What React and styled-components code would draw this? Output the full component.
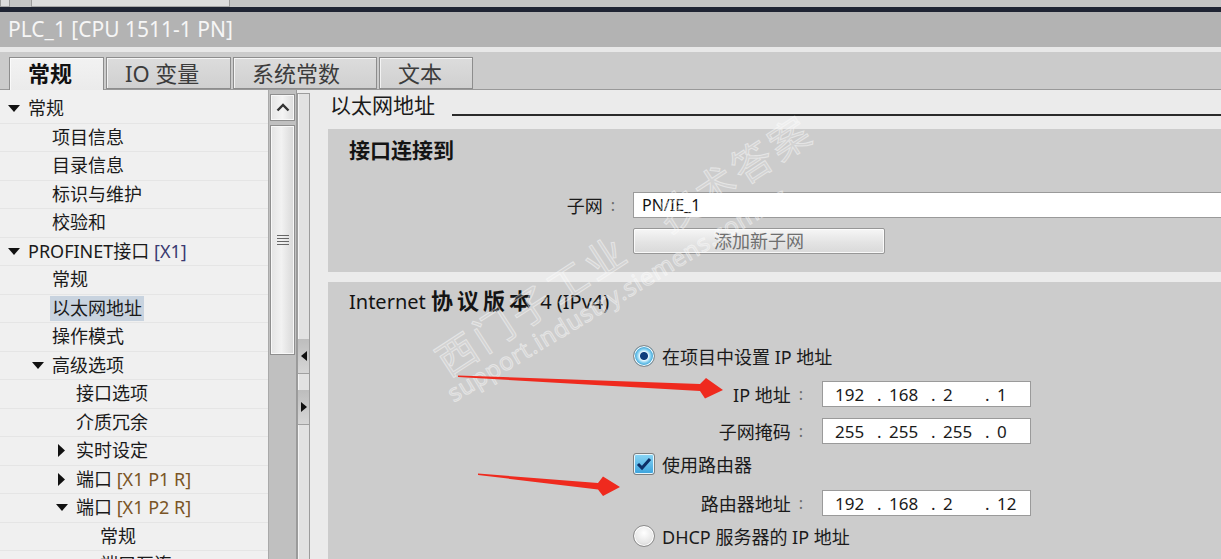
import React from 'react';
import styled, { createGlobalStyle } from 'styled-components';

const GlobalStyle = createGlobalStyle`
  html, body { margin: 0; padding: 0; }
  body {
    background: #ebebeb;
    font-family: "Noto Sans", "Noto Sans CJK SC", sans-serif;
    overflow: hidden;
  }
`;

const treeItems = [
  { level: 0, caret: 'down', text: '常规' },
  { level: 1, text: '项目信息' },
  { level: 1, text: '目录信息' },
  { level: 1, text: '标识与维护' },
  { level: 1, text: '校验和' },
  { level: 0, caret: 'down', text: 'PROFINET接口 ', tag: '[X1]', tone: '#3a3a70' },
  { level: 1, text: '常规' },
  { level: 1, text: '以太网地址', selected: true },
  { level: 1, text: '操作模式' },
  { level: 1, caret: 'down', text: '高级选项' },
  { level: 2, text: '接口选项' },
  { level: 2, text: '介质冗余' },
  { level: 2, caret: 'right', text: '实时设定' },
  { level: 2, caret: 'right', text: '端口 ', tag: '[X1 P1 R]', tone: '#7a5526' },
  { level: 2, caret: 'down', text: '端口 ', tag: '[X1 P2 R]', tone: '#7a5526' },
  { level: 3, text: '常规' },
  { level: 3, text: '端口互连' },
];

const tabs = [
  { label: '常规', w: 95, active: true },
  { label: 'IO 变量', w: 125 },
  { label: '系统常数', w: 144 },
  { label: '文本', w: 94 },
];

const Page = styled.div`
  position: relative;
  width: 1221px;
  height: 559px;
  overflow: hidden;
  display: flex;
  flex-direction: column;
`;

const TopStrip = styled.div`
  height: 7px;
  background: #c4c4c4;
  display: flex;
`;

const StripBox = styled.div`
  width: ${p => p.$w}px;
  margin-left: ${p => p.$ml || 0}px;
  background: #dcdcdc;
  border-right: 1px solid #9c9c9c;
  border-left: 1px solid #9c9c9c;
  border-bottom: 1px solid #a8a8a8;
`;

const DarkLine = styled.div`
  height: 5px;
  background: #1f2433;
`;

const TitleBar = styled.div`
  height: 35px;
  line-height: 35px;
  background: #b3b3b3;
  color: #f6f6f6;
  font-size: 21px;
  padding-left: 8px;
`;

const LightLine = styled.div`
  height: 5px;
  background: #e8e8e8;
`;

const TabBar = styled.div`
  box-sizing: border-box;
  height: 38px;
  background: #cbcbcb;
  border-bottom: 1px solid #999;
  display: flex;
  align-items: flex-end;
  gap: 2px;
  padding-left: 9px;
`;

const Tab = styled.div`
  box-sizing: border-box;
  width: ${p => p.$w}px;
  height: ${p => (p.$active ? 33 : 32)}px;
  margin-bottom: ${p => (p.$active ? -1 : 0)}px;
  border: 1px solid #8d8d8d;
  border-bottom: ${p => (p.$active ? 'none' : '1px solid #8d8d8d')};
  background: ${p => (p.$active ? 'linear-gradient(#f2f2f2, #ebebeb)' : 'linear-gradient(#dcdcdc, #d0d0d0)')};
  box-shadow: inset 1px 1px 0 rgba(255, 255, 255, 0.7);
  padding-left: 18px;
  font-size: 22px;
  line-height: 30px;
  font-weight: ${p => (p.$active ? 700 : 400)};
  color: ${p => (p.$active ? '#111' : '#3c3c3c')};
  white-space: nowrap;
`;

const Main = styled.div`
  flex: 1;
  display: flex;
  min-height: 0;
`;

const Tree = styled.div`
  width: 268px;
  background: #f0f0f0;
  padding-top: 5px;
  overflow: hidden;
`;

const Row = styled.div`
  box-sizing: border-box;
  height: 28.5px;
  display: flex;
  align-items: center;
  padding-left: ${p => 8 + p.$level * 24}px;
  border-bottom: 1px solid #e5e5e5;
  font-size: 18px;
  color: #1a1a1a;
  white-space: nowrap;
`;

const CaretSlot = styled.div`
  width: 20px;
  display: flex;
  align-items: center;
`;

const Label = styled.span`
  line-height: 25px;
  padding: 0 2px;
  margin-left: -2px;
  background: ${p => (p.$selected ? '#c8d3df' : 'transparent')};
`;

const Tag = styled.span`
  color: ${p => p.$tone};
`;

const Caret = ({ dir }) =>
  dir === 'down' ? (
    <svg width="12" height="7" viewBox="0 0 12 7">
      <path d="M0 0 L12 0 L6 7 Z" fill="#111" />
    </svg>
  ) : (
    <svg width="9" height="13" viewBox="0 0 9 13" style={{ marginLeft: 2 }}>
      <path d="M0 0 L7 6.5 L0 13 Z" fill="#111" />
    </svg>
  );

const ScrollBar = styled.div`
  box-sizing: border-box;
  width: 29px;
  background: #c0c0c0;
  border-left: 1px solid #a9a9a9;
  border-right: 1px solid #9a9a9a;
  padding: 4px 1px 0;
`;

const ScrollButton = styled.div`
  box-sizing: border-box;
  height: 27px;
  border: 1px solid #8f8f8f;
  box-shadow: inset 0 0 0 1px #f8f8f8;
  background: linear-gradient(90deg, #e6e6e6, #f4f4f4 50%, #dcdcdc);
  display: flex;
  align-items: center;
  justify-content: center;
`;

const ScrollThumb = styled.div`
  box-sizing: border-box;
  height: 230px;
  margin-top: 4px;
  border: 1px solid #8f8f8f;
  box-shadow: inset 0 0 0 1px #f8f8f8;
  background: linear-gradient(90deg, #e4e4e4, #f2f2f2 45%, #d8d8d8);
  display: flex;
  align-items: center;
  justify-content: center;
`;

const Splitter = styled.div`
  box-sizing: border-box;
  width: 13px;
  margin-top: 3px;
  border: 1px solid #9c9c9c;
  border-bottom: none;
  background: #e2e2e2;
  box-shadow: inset 1px 0 0 #f4f4f4;
  padding-top: 245px;
`;

const SplitButton = styled.div`
  height: 34px;
  margin-bottom: ${p => p.$mb || 0}px;
  background: linear-gradient(#bdbdbd, #d6d6d6);
  border-bottom: 1px solid #a0a0a0;
  display: flex;
  align-items: center;
  justify-content: center;
`;

const Content = styled.div`
  flex: 1;
  min-width: 0;
  padding-left: 18px;
  display: flex;
  flex-direction: column;
`;

const SectionHeader = styled.div`
  height: 39px;
  box-sizing: border-box;
  padding-top: 3px;
  display: flex;
  align-items: flex-start;
`;

const SectionTitle = styled.div`
  font-size: 21px;
  line-height: 25px;
  color: #1a1a1a;
  padding-left: 2px;
`;

const SectionRule = styled.div`
  flex: 1;
  height: 2px;
  margin: 21px 0 0 17px;
  background: #2a2a2a;
`;

const Panel = styled.div`
  background: #cccccc;
  padding: ${p => p.$pad};
  margin-bottom: 10px;
  overflow: hidden;
`;

const PanelTitle = styled.div`
  padding-left: 21px;
  font-size: ${p => p.$size || 21}px;
  line-height: 26px;
  font-weight: ${p => (p.$bold ? 700 : 400)};
  color: #141414;
  white-space: nowrap;
`;

const Strong = styled.span`
  font-size: 22px;
  line-height: 1;
  font-weight: 700;
  letter-spacing: 4px;
`;

const FormRow = styled.div`
  display: flex;
  align-items: center;
  margin-top: ${p => p.$mt || 0}px;
`;

const FieldLabel = styled.div`
  box-sizing: border-box;
  width: ${p => p.$w}px;
  margin-right: ${p => p.$gap}px;
  display: flex;
  justify-content: flex-end;
  align-items: center;
  font-size: 18px;
  color: #1a1a1a;
  white-space: nowrap;
`;

const Colon = styled.span`
  margin-left: 8px;
  color: #6a6a6a;
  font-size: 16px;
`;

const TextInput = styled.div`
  box-sizing: border-box;
  flex: 1;
  height: 26px;
  margin-right: -3px;
  background: #fff;
  border: 1px solid #9a9a9a;
  padding-left: 8px;
  font-size: 16px;
  line-height: 24px;
  color: #111;
`;

const Button = styled.div`
  box-sizing: border-box;
  width: 252px;
  height: 26px;
  margin-left: 305px;
  border: 1px solid #979797;
  border-radius: 2px;
  background: linear-gradient(#f6f6f6, #e4e4e4 55%, #d9d9d9);
  box-shadow: inset 0 0 0 1px rgba(255, 255, 255, 0.8);
  text-align: center;
  font-size: 18px;
  line-height: 24px;
  color: #6f6f6f;
`;

const Options = styled.div`
  padding-left: 305px;
`;

const OptionRow = styled.div`
  height: 30px;
  margin-top: ${p => p.$mt || 0}px;
  display: flex;
  align-items: center;
  font-size: 18px;
  color: #1a1a1a;
  white-space: nowrap;
`;

const Radio = styled.span`
  box-sizing: border-box;
  width: 22px;
  height: 22px;
  margin-right: 7px;
  border-radius: 50%;
  border: 1px solid #8a8a8a;
  background: ${p =>
    p.$checked
      ? 'radial-gradient(circle, #0f3d7c 0 3.5px, #e8f7fd 4.5px, #8fd4f2 6.5px, #3ea6d8 9px)'
      : 'radial-gradient(circle at 50% 35%, #ffffff, #e6e6e6 60%, #bdbdbd)'};
  box-shadow: inset 0 0 0 1px #fff;
`;

const Check = styled.span`
  box-sizing: border-box;
  width: 22px;
  height: 22px;
  margin-right: 7px;
  border-radius: 3px;
  border: 1px solid #7f7f7f;
  background: linear-gradient(#8bd6f5, #3aa2dc);
  box-shadow: inset 0 0 0 1px #e8f6fc;
  display: flex;
  align-items: center;
  justify-content: center;
`;

const IpField = styled.div`
  box-sizing: border-box;
  width: 209px;
  height: 26px;
  background: #fff;
  border: 1px solid #9a9a9a;
  padding-left: 12px;
  display: flex;
  align-items: center;
  overflow: hidden;
  font-size: 17px;
  color: #1a1a1a;
`;

const Octet = styled.span`
  flex: none;
  width: 54px;
  display: flex;
`;

const OctetNum = styled.span`
  flex: none;
  width: 42px;
`;

const Watermark = styled.div`
  position: absolute;
  left: ${p => p.$x}px;
  top: ${p => p.$y}px;
  transform-origin: 0 50%;
  transform: rotate(${p => p.$deg}deg);
  font-size: ${p => p.$size}px;
  line-height: 1;
  letter-spacing: ${p => p.$ls}px;
  white-space: nowrap;
  color: rgba(255, 255, 255, 0.16);
  -webkit-text-stroke: 1px rgba(255, 255, 255, 0.45);
  pointer-events: none;
`;

const Overlay = styled.svg`
  position: absolute;
  left: 0;
  top: 0;
  pointer-events: none;
`;

const IpInput = ({ parts }) => (
  <IpField>
    {parts.map((n, i) => (
      <Octet key={i}>
        <OctetNum>{n}</OctetNum>
        {i < 3 ? '.' : ''}
      </Octet>
    ))}
  </IpField>
);

const IpRow = ({ label, parts, mt }) => (
  <FormRow $mt={mt} style={{ height: 30 }}>
    <FieldLabel $w={170} $gap={19}>
      {label}
      <Colon>:</Colon>
    </FieldLabel>
    <IpInput parts={parts} />
  </FormRow>
);

const App = () => {
  return (
    <Page>
      <GlobalStyle />
      <TopStrip>
        <StripBox $w={8} />
        <StripBox $w={197} $ml={21} />
      </TopStrip>
      <DarkLine />
      <TitleBar>PLC_1 [CPU 1511-1 PN]</TitleBar>
      <LightLine />
      <TabBar>
        {tabs.map(t => (
          <Tab key={t.label} $w={t.w} $active={t.active}>
            {t.label}
          </Tab>
        ))}
      </TabBar>
      <Main>
        <Tree>
          {treeItems.map((it, i) => (
            <Row key={i} $level={it.level}>
              <CaretSlot>{it.caret && <Caret dir={it.caret} />}</CaretSlot>
              <Label $selected={it.selected}>
                {it.text}
                {it.tag && <Tag $tone={it.tone}>{it.tag}</Tag>}
              </Label>
            </Row>
          ))}
        </Tree>
        <ScrollBar>
          <ScrollButton>
            <svg width="14" height="9" viewBox="0 0 14 9">
              <path d="M1.5 7.5 L7 2 L12.5 7.5" fill="none" stroke="#333" strokeWidth="2.4" />
            </svg>
          </ScrollButton>
          <ScrollThumb>
            <svg width="12" height="11" viewBox="0 0 12 11">
              {[0.5, 3.5, 6.5, 9.5].map(y => (
                <line key={y} x1="0" x2="12" y1={y} y2={y} stroke="#666" strokeWidth="1" />
              ))}
            </svg>
          </ScrollThumb>
        </ScrollBar>
        <Splitter>
          <SplitButton $mb={16}>
            <svg width="6" height="10" viewBox="0 0 6 10">
              <path d="M6 0 L0 5 L6 10 Z" fill="#111" />
            </svg>
          </SplitButton>
          <SplitButton>
            <svg width="6" height="10" viewBox="0 0 6 10">
              <path d="M0 0 L6 5 L0 10 Z" fill="#111" />
            </svg>
          </SplitButton>
        </Splitter>
        <Content>
          <SectionHeader>
            <SectionTitle>以太网地址</SectionTitle>
            <SectionRule />
          </SectionHeader>
          <Panel $pad="8px 0 18px">
            <PanelTitle $bold>接口连接到</PanelTitle>
            <FormRow $mt={29}>
              <FieldLabel $w={287} $gap={18}>
                子网
                <Colon>:</Colon>
              </FieldLabel>
              <TextInput>PN/IE_1</TextInput>
            </FormRow>
            <FormRow $mt={10}>
              <Button>添加新子网</Button>
            </FormRow>
          </Panel>
          <Panel $pad="7px 0 30px" style={{ flex: 1, marginBottom: 0 }}>
            <PanelTitle $size={20}>
              Internet <Strong>协议版本</Strong> 4 (IPv4)
            </PanelTitle>
            <Options>
              <OptionRow $mt={26}>
                <Radio $checked />
                在项目中设置 IP 地址
              </OptionRow>
              <IpRow label="IP 地址" parts={['192', '168', '2', '1']} mt={8} />
              <IpRow label="子网掩码" parts={['255', '255', '255', '0']} mt={7} />
              <OptionRow $mt={3}>
                <Check>
                  <svg width="16" height="14" viewBox="0 0 16 14">
                    <path d="M2 7 L6 11 L14 2" fill="none" stroke="#0d2f66" strokeWidth="3" />
                  </svg>
                </Check>
                使用路由器
              </OptionRow>
              <IpRow label="路由器地址" parts={['192', '168', '2', '12']} mt={9} />
              <OptionRow $mt={3}>
                <Radio />
                DHCP 服务器的 IP 地址
              </OptionRow>
            </Options>
          </Panel>
        </Content>
      </Main>
      <Watermark $x={440} $y={345} $deg={-33} $size={40} $ls={4}>
        西门子工业　技术答案
      </Watermark>
      <Watermark $x={449} $y={383} $deg={-31} $size={24} $ls={0.6}>
        support.industry.siemens.com/cs
      </Watermark>
      <Overlay width="1221" height="559" viewBox="0 0 1221 559">
        <polygon
          points="458,375.5 700,384 706,378 723,390 705,398.5 700,391 458,377"
          fill="#ef2a1e"
        />
        <polygon
          points="478,473.5 598,483 603,476.5 620,487 603,496 598,489.5 478,475"
          fill="#ef2a1e"
        />
      </Overlay>
    </Page>
  );
};

export default App;
